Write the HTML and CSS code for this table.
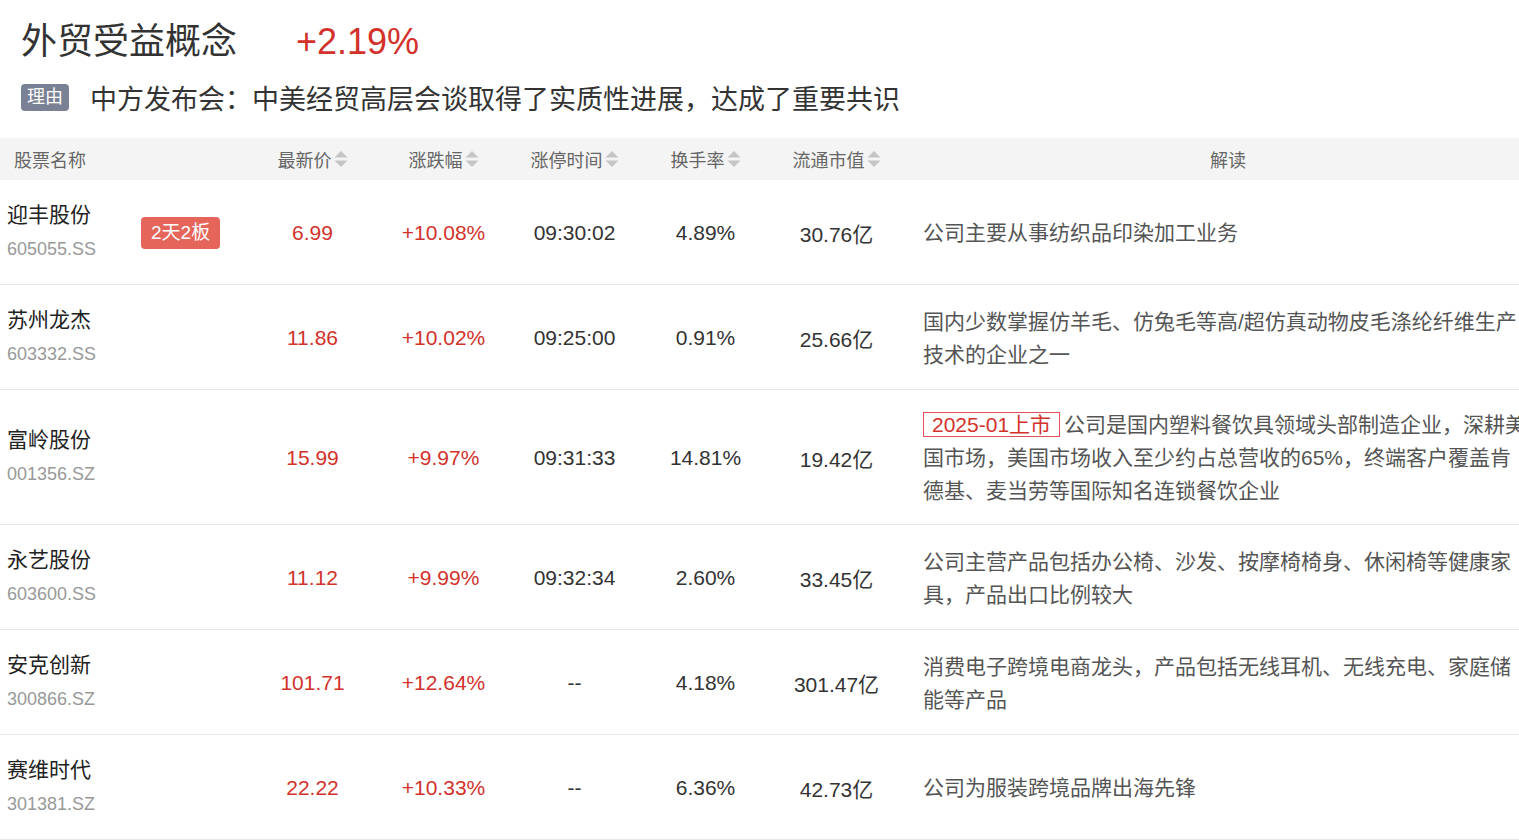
FILE: index.html
```html
<!DOCTYPE html>
<html lang="zh-CN">
<head>
<meta charset="utf-8">
<title>外贸受益概念</title>
<link rel="stylesheet" href="styles.css">
</head>
<body>
<div class="page">
  <header class="topic">
    <div class="title-row">
      <h1 class="title">外贸受益概念</h1>
      <span class="pct up">+2.19%</span>
    </div>
    <div class="reason-row">
      <span class="reason-tag">理由</span>
      <span class="reason-text">中方发布会：中美经贸高层会谈取得了实质性进展，达成了重要共识</span>
    </div>
  </header>

  <table class="stocks">
    <colgroup>
      <col class="c-name"><col class="c-num"><col class="c-num"><col class="c-num"><col class="c-num"><col class="c-num"><col class="c-desc">
    </colgroup>
    <thead>
      <tr>
        <th class="th-name">股票名称</th>
        <th><span class="sortable">最新价<svg class="sort" viewBox="0 0 14 18"><path d="M7 1 L13.5 7.5 H0.5 Z"/><path d="M7 17 L13.5 10.5 H0.5 Z"/></svg></span></th>
        <th><span class="sortable">涨跌幅<svg class="sort" viewBox="0 0 14 18"><path d="M7 1 L13.5 7.5 H0.5 Z"/><path d="M7 17 L13.5 10.5 H0.5 Z"/></svg></span></th>
        <th><span class="sortable">涨停时间<svg class="sort" viewBox="0 0 14 18"><path d="M7 1 L13.5 7.5 H0.5 Z"/><path d="M7 17 L13.5 10.5 H0.5 Z"/></svg></span></th>
        <th><span class="sortable">换手率<svg class="sort" viewBox="0 0 14 18"><path d="M7 1 L13.5 7.5 H0.5 Z"/><path d="M7 17 L13.5 10.5 H0.5 Z"/></svg></span></th>
        <th><span class="sortable">流通市值<svg class="sort" viewBox="0 0 14 18"><path d="M7 1 L13.5 7.5 H0.5 Z"/><path d="M7 17 L13.5 10.5 H0.5 Z"/></svg></span></th>
        <th class="th-desc">解读</th>
      </tr>
    </thead>
    <tbody>
      <tr>
        <td class="td-name"><div class="name-cell"><div class="name-block"><div class="name">迎丰股份</div><div class="code">605055.SS</div></div><span class="board">2天2板</span></div></td>
        <td class="up">6.99</td>
        <td class="up">+10.08%</td>
        <td>09:30:02</td>
        <td>4.89%</td>
        <td>30.76亿</td>
        <td class="td-desc">公司主要从事纺织品印染加工业务</td>
      </tr>
      <tr>
        <td class="td-name"><div class="name-cell"><div class="name-block"><div class="name">苏州龙杰</div><div class="code">603332.SS</div></div></div></td>
        <td class="up">11.86</td>
        <td class="up">+10.02%</td>
        <td>09:25:00</td>
        <td>0.91%</td>
        <td>25.66亿</td>
        <td class="td-desc">国内少数掌握仿羊毛、仿兔毛等高/超仿真动物皮毛涤纶纤维生产技术的企业之一</td>
      </tr>
      <tr>
        <td class="td-name"><div class="name-cell"><div class="name-block"><div class="name">富岭股份</div><div class="code">001356.SZ</div></div></div></td>
        <td class="up">15.99</td>
        <td class="up">+9.97%</td>
        <td>09:31:33</td>
        <td>14.81%</td>
        <td>19.42亿</td>
        <td class="td-desc"><span class="ipo">2025-01上市</span>公司是国内塑料餐饮具领域头部制造企业，深耕美国市场，美国市场收入至少约占总营收的65%，终端客户覆盖肯德基、麦当劳等国际知名连锁餐饮企业</td>
      </tr>
      <tr>
        <td class="td-name"><div class="name-cell"><div class="name-block"><div class="name">永艺股份</div><div class="code">603600.SS</div></div></div></td>
        <td class="up">11.12</td>
        <td class="up">+9.99%</td>
        <td>09:32:34</td>
        <td>2.60%</td>
        <td>33.45亿</td>
        <td class="td-desc">公司主营产品包括办公椅、沙发、按摩椅椅身、休闲椅等健康家具，产品出口比例较大</td>
      </tr>
      <tr>
        <td class="td-name"><div class="name-cell"><div class="name-block"><div class="name">安克创新</div><div class="code">300866.SZ</div></div></div></td>
        <td class="up">101.71</td>
        <td class="up">+12.64%</td>
        <td>--</td>
        <td>4.18%</td>
        <td>301.47亿</td>
        <td class="td-desc">消费电子跨境电商龙头，产品包括无线耳机、无线充电、家庭储能等产品</td>
      </tr>
      <tr>
        <td class="td-name"><div class="name-cell"><div class="name-block"><div class="name">赛维时代</div><div class="code">301381.SZ</div></div></div></td>
        <td class="up">22.22</td>
        <td class="up">+10.33%</td>
        <td>--</td>
        <td>6.36%</td>
        <td>42.73亿</td>
        <td class="td-desc">公司为服装跨境品牌出海先锋</td>
      </tr>
    </tbody>
  </table>
</div>
</body>
</html>
```

FILE: styles.css
```css
html, body {
  margin: 0;
  padding: 0;
  background: #fff;
}

body {
  font-family: "Liberation Sans", "Noto Sans CJK SC", sans-serif;
  color: #333;
  overflow-x: hidden;
}

.page {
  width: 1554px;
}

.topic {
  padding: 17px 21px 0;
}

.title-row {
  display: flex;
  align-items: center;
  height: 50px;
}

.title {
  margin: 0;
  font-size: 36px;
  font-weight: normal;
  color: #333;
  line-height: 50px;
}

.pct {
  margin-left: 59px;
  font-size: 36px;
  line-height: 50px;
}

.up {
  color: #d2322b;
}

.reason-row {
  display: flex;
  align-items: center;
  height: 40px;
  margin-top: 10px;
}

.reason-tag {
  display: inline-block;
  background: #7b8195;
  color: #fff;
  font-size: 18px;
  line-height: 27px;
  padding: 0 6px;
  border-radius: 4px;
}

.reason-text {
  margin-left: 21px;
  font-size: 27px;
  color: #333;
}

.stocks {
  margin-top: 21px;
  width: 1554px;
  table-layout: fixed;
  border-collapse: collapse;
}

.c-name { width: 247px; }
.c-num { width: 131px; }
.c-desc { width: 652px; }

.stocks th {
  height: 42px;
  padding: 0;
  background: #f4f4f4;
  font-size: 18px;
  font-weight: normal;
  color: #666;
  text-align: center;
}

.stocks th.th-name {
  text-align: left;
  padding-left: 14px;
}

.sortable {
  display: inline-flex;
  align-items: center;
  gap: 2px;
}

.sort {
  width: 14px;
  height: 18px;
  fill: #c5c5c5;
}

.stocks td {
  padding: 18px 0 17px;
  border-bottom: 1px solid #e8e8e8;
  font-size: 21px;
  text-align: center;
  vertical-align: middle;
}

.stocks td.td-name {
  text-align: left;
}

.name-cell {
  display: flex;
  align-items: center;
}

.name-block {
  width: 141px;
  padding-left: 7px;
  box-sizing: border-box;
}

.name {
  font-size: 21px;
  line-height: 34px;
  color: #222;
}

.code {
  font-size: 18px;
  line-height: 35px;
  color: #999;
}

.board {
  display: inline-block;
  background: #e5655b;
  color: #fff;
  font-size: 19px;
  line-height: 32px;
  padding: 0 10px;
  border-radius: 4px;
}

.stocks td.td-desc {
  text-align: left;
  padding: 18px 24px 17px 21px;
  font-size: 21px;
  line-height: 33px;
  color: #555;
}

.ipo {
  display: inline-block;
  border: 1px solid #e0505a;
  color: #d2322b;
  font-size: 21px;
  line-height: 23px;
  padding: 0 8px;
  margin-right: 4px;
}
```
